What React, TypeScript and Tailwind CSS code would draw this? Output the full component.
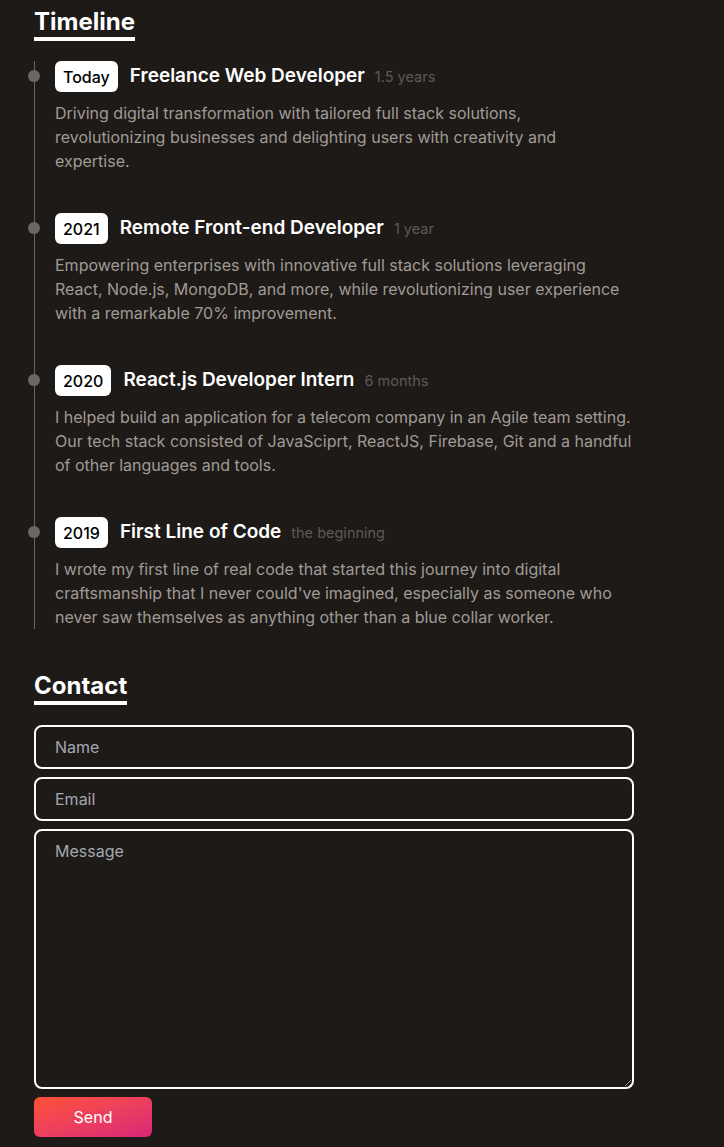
import React from "react";

interface TimelineItem {
  badge: string;
  title: string;
  duration: string;
  description: string;
}

const items: TimelineItem[] = [
  {
    badge: "Today",
    title: "Freelance Web Developer",
    duration: "1.5 years",
    description:
      "Driving digital transformation with tailored full stack solutions, revolutionizing businesses and delighting users with creativity and expertise.",
  },
  {
    badge: "2021",
    title: "Remote Front-end Developer",
    duration: "1 year",
    description:
      "Empowering enterprises with innovative full stack solutions leveraging React, Node.js, MongoDB, and more, while revolutionizing user experience with a remarkable 70% improvement.",
  },
  {
    badge: "2020",
    title: "React.js Developer Intern",
    duration: "6 months",
    description:
      "I helped build an application for a telecom company in an Agile team setting. Our tech stack consisted of JavaSciprt, ReactJS, Firebase, Git and a handful of other languages and tools.",
  },
  {
    badge: "2019",
    title: "First Line of Code",
    duration: "the beginning",
    description:
      "I wrote my first line of real code that started this journey into digital craftsmanship that I never could've imagined, especially as someone who never saw themselves as anything other than a blue collar worker.",
  },
];

const SectionTitle: React.FC<{ children: React.ReactNode }> = ({ children }) => (
  <h2 className="inline-block border-b-4 border-white text-2xl leading-[30px] font-bold text-white">
    {children}
  </h2>
);

export default function App() {
  return (
    <div className="min-h-[1147px] w-full bg-[#1e1a17] px-[34px] pt-[7px] font-['Inter',sans-serif]">
      <div className="w-[600px]">
        {/* Timeline */}
        <SectionTitle>Timeline</SectionTitle>
        <ul className="mt-5 border-l border-[#6b6866]">
          {items.map((item, i) => (
            <li
              key={item.badge}
              className={`relative pl-5 ${i < items.length - 1 ? "mb-10" : ""}`}
            >
              <span className="absolute top-[9px] left-[-7px] h-3 w-3 rounded-full bg-[#6b6866]" />
              <div className="flex items-center">
                <span className="flex h-[31px] items-center rounded-md bg-white px-2 pt-px text-base font-medium text-black">
                  {item.badge}
                </span>
                <span className="ml-3 text-[19px] font-semibold text-white">
                  {item.title}
                </span>
                <span className="ml-2.5 text-[14.5px] text-[#5f5955]">
                  {item.duration}
                </span>
              </div>
              <p className="mt-[9px] text-base leading-6 text-[#a09a96]">
                {item.description}
              </p>
            </li>
          ))}
        </ul>

        {/* Contact */}
        <div className="mt-[42px]">
          <SectionTitle>Contact</SectionTitle>
        </div>
        <form className="mt-5 flex flex-col gap-2" onSubmit={(e) => e.preventDefault()}>
          <input
            type="text"
            placeholder="Name"
            className="h-11 w-full rounded-lg border-2 border-white bg-transparent pl-[19px] text-base text-white outline-none placeholder:text-[#a3a8b0]"
          />
          <input
            type="email"
            placeholder="Email"
            className="h-11 w-full rounded-lg border-2 border-white bg-transparent pl-[19px] text-base text-white outline-none placeholder:text-[#a3a8b0]"
          />
          <textarea
            placeholder="Message"
            className="block h-[260px] w-full rounded-lg border-2 border-white bg-transparent px-[19px] py-2 text-base text-white outline-none placeholder:text-[#a3a8b0]"
          />
          <button
            type="submit"
            className="h-10 w-[118px] rounded-md bg-linear-to-br from-[#ff5133] to-[#da2677] text-base text-white"
          >
            Send
          </button>
        </form>
      </div>
    </div>
  );
}
